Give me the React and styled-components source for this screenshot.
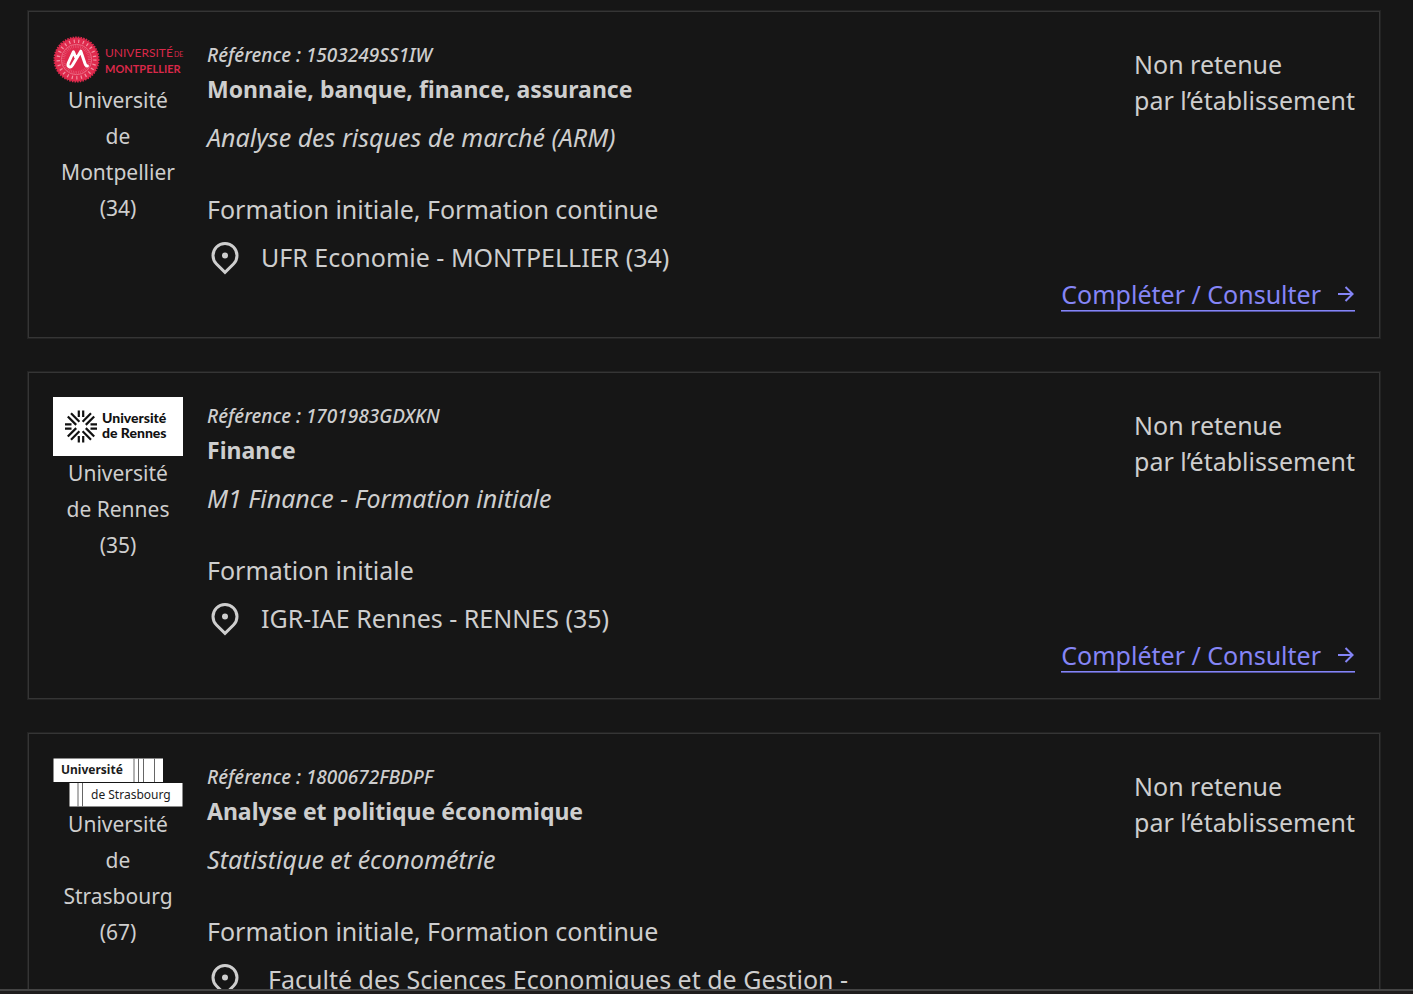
import React from "react";
import styled, { createGlobalStyle } from "styled-components";

const GlobalStyle = createGlobalStyle`
  * { box-sizing: border-box; }
  body {
    margin: 0;
    background: #161616;
    color: #cecece;
    font-family: "Noto Sans", "Open Sans", sans-serif;
    font-size: 25px;
    line-height: 36px;
  }
  h3, p { margin: 0; }
`;

const Page = styled.div`
  height: 100vh;
  display: flex;
  flex-direction: column;
`;

const List = styled.main`
  flex: 1;
  min-height: 0;
  overflow: hidden;
  display: flex;
  flex-direction: column;
  gap: 34px;
  padding: 11px 33px 0 28px;
`;

const BottomBar = styled.footer`
  flex: none;
  height: 5px;
  background: #1f1d1d;
  border-top: 2px solid #444444;
`;

const Card = styled.article`
  flex: none;
  display: grid;
  grid-template-columns: 130px minmax(0, 1fr) auto;
  grid-template-rows: auto auto;
  column-gap: 24px;
  padding: 24px;
  border: 1px solid #353535;
  box-shadow: 0 0 0 1px #232323;
`;

const School = styled.div`
  grid-row: 1 / 3;
  text-align: center;
  font-size: 21px;

  svg { display: block; }
`;

const SchoolName = styled.p`
  padding: 0 4px;
`;

const Details = styled.div`
  padding-top: 5px;
`;

const Reference = styled.p`
  margin-bottom: 2px;
  font-size: 19px;
  line-height: 28px;
  font-style: italic;
  font-weight: 500;
`;

const Title = styled.h3`
  font-size: 23px;
  font-weight: 700;
`;

const Track = styled.p`
  margin-top: 12px;
  font-style: italic;
`;

const Mode = styled.p`
  margin-top: 36px;
`;

const Place = styled.div`
  display: flex;
  align-items: flex-start;
  gap: ${(p) => (p.$wide ? 25 : 18)}px;
  max-width: 660px;
  margin-top: 12px;

  svg { flex: none; }
`;

const Status = styled.p`
  padding-top: 10px;
`;

const Action = styled.div`
  grid-column: 2 / 4;
  display: flex;
  justify-content: flex-end;
`;

const ActionLink = styled.a`
  display: flex;
  align-items: center;
  gap: 16px;
  margin-bottom: 2px;
  padding-top: 3px;
  line-height: 32px;
  color: #8585f6;
  text-decoration: none;
  border-bottom: 1px solid #8585f6;
  box-shadow: 0 1px 0 #5454a0;
`;

const PinIcon = () => (
  <svg width="36" height="36" viewBox="0 0 24 24" fill="currentColor" aria-hidden="true">
    <path d="M12 20.9l4.95-4.95a7 7 0 1 0-9.9 0L12 20.9zm0 2.828l-6.364-6.364a9 9 0 1 1 12.728 0L12 23.728zM12 13a2 2 0 1 1 0-4 2 2 0 0 1 0 4z" />
  </svg>
);

const ArrowIcon = () => (
  <svg width="18" height="24" viewBox="3 0 18 24" fill="currentColor" aria-hidden="true">
    <path d="M16.172 11l-5.364-5.364 1.414-1.414L20 12l-7.778 7.778-1.414-1.414L16.172 13H4v-2z" />
  </svg>
);

const MontpellierLogo = () => (
  <svg width="130" height="46" viewBox="0 0 130 46" overflow="visible" role="img" aria-label="Université de Montpellier">
    <circle cx="23.5" cy="23.5" r="22" fill="#df2a4d" />
    <circle cx="23.5" cy="23.5" r="22.2" fill="none" stroke="#df2a4d" strokeWidth="1.6" strokeDasharray="1.6 1.1" />
    <circle cx="23.5" cy="23.5" r="18.3" fill="none" stroke="#f4a3b2" strokeWidth="3.4" strokeDasharray="1.2 3.4" opacity="0.85" />
    <circle cx="23.5" cy="23.5" r="15.2" fill="none" stroke="#ee8297" strokeWidth="0.7" />
    <circle cx="23.5" cy="23.5" r="13" fill="none" stroke="#ea6680" strokeWidth="3" strokeDasharray="0.5 1.3" />
    <path
      d="M22.8 21.5L20.4 15.8L15.4 26.8c-1.5 3.9 2 5.9 4.2 2.2L27.8 15.2L32 27.6c.6 1.9 1.3 2.5 2.4 2.4"
      fill="none" stroke="#fff" strokeWidth="3" strokeLinecap="round" strokeLinejoin="round"
    />
    <g fill="#d92849" fontFamily="Lato, sans-serif">
      <text x="52" y="21" fontSize="12">UNIVERSITÉ</text>
      <text x="121" y="21" fontSize="7">DE</text>
      <text x="52" y="37" fontSize="11" fontWeight="700">MONTPELLIER</text>
    </g>
  </svg>
);

const RennesLogo = () => (
  <svg width="130" height="58" viewBox="0 0 130 58" overflow="visible" role="img" aria-label="Université de Rennes">
    <rect width="130" height="59" fill="#fff" />
    <g transform="translate(28 29.5)" stroke="#111" strokeWidth="2.2" fill="none">
      {[0, 90, 180, 270].map((angle) => (
        <g key={angle} transform={`rotate(${angle})`}>
          <path d="M-2.2 -16v6.5M2.2 -16v6.5" />
          <path d="M1.6 -4.8L10 -13.2M4.8 -1.6L13.2 -10" />
        </g>
      ))}
    </g>
    <g fill="#111" fontFamily="Lato, sans-serif" fontSize="14" fontWeight="900">
      <text x="49" y="26">Université</text>
      <text x="49" y="41">de Rennes</text>
    </g>
  </svg>
);

const StrasbourgLogo = () => (
  <svg width="130" height="48" viewBox="0 0 130 48" overflow="visible" role="img" aria-label="Université de Strasbourg">
    <rect x="0.5" y="0.5" width="109.5" height="23.5" fill="#fff" />
    <rect x="16.5" y="25" width="113" height="23.5" fill="#fff" />
    <path d="M81 .5V24M85.5 .5V24M90.5 .5V24M101.5 .5V24M25 25v23.5M29.5 25v23.5" stroke="#666" />
    <g fill="#1c1c1c" fontFamily="'Noto Sans', sans-serif">
      <text x="8" y="16" fontSize="12" fontWeight="700">Université</text>
      <text x="38" y="41" fontSize="12">de Strasbourg</text>
    </g>
  </svg>
);

const applications = [
  {
    Logo: MontpellierLogo,
    school: ["Université", "de", "Montpellier", "(34)"],
    reference: "1503249SS1IW",
    title: "Monnaie, banque, finance, assurance",
    track: "Analyse des risques de marché (ARM)",
    mode: "Formation initiale, Formation continue",
    place: "UFR Economie - MONTPELLIER (34)",
  },
  {
    Logo: RennesLogo,
    school: ["Université", "de Rennes", "(35)"],
    reference: "1701983GDXKN",
    title: "Finance",
    track: "M1 Finance - Formation initiale",
    mode: "Formation initiale",
    place: "IGR-IAE Rennes - RENNES (35)",
  },
  {
    Logo: StrasbourgLogo,
    school: ["Université", "de", "Strasbourg", "(67)"],
    reference: "1800672FBDPF",
    title: "Analyse et politique économique",
    track: "Statistique et économétrie",
    mode: "Formation initiale, Formation continue",
    place: "Faculté des Sciences Economiques et de Gestion -",
    wide: true,
  },
];

const Lines = ({ items }) =>
  items.map((line, i) => (
    <React.Fragment key={line}>
      {i > 0 && <br />}
      {line}
    </React.Fragment>
  ));

export default function App() {
  return (
    <Page>
      <GlobalStyle />
      <List>
        {applications.map(({ Logo, ...a }) => (
          <Card key={a.reference}>
            <School>
              <Logo />
              <SchoolName><Lines items={a.school} /></SchoolName>
            </School>
            <Details>
              <Reference>Référence : {a.reference}</Reference>
              <Title>{a.title}</Title>
              <Track>{a.track}</Track>
              <Mode>{a.mode}</Mode>
              <Place $wide={a.wide}>
                <PinIcon />
                <p>{a.place}</p>
              </Place>
            </Details>
            <Status><Lines items={["Non retenue", "par l’établissement"]} /></Status>
            <Action>
              <ActionLink href="#">
                Compléter / Consulter
                <ArrowIcon />
              </ActionLink>
            </Action>
          </Card>
        ))}
      </List>
      <BottomBar />
    </Page>
  );
}
